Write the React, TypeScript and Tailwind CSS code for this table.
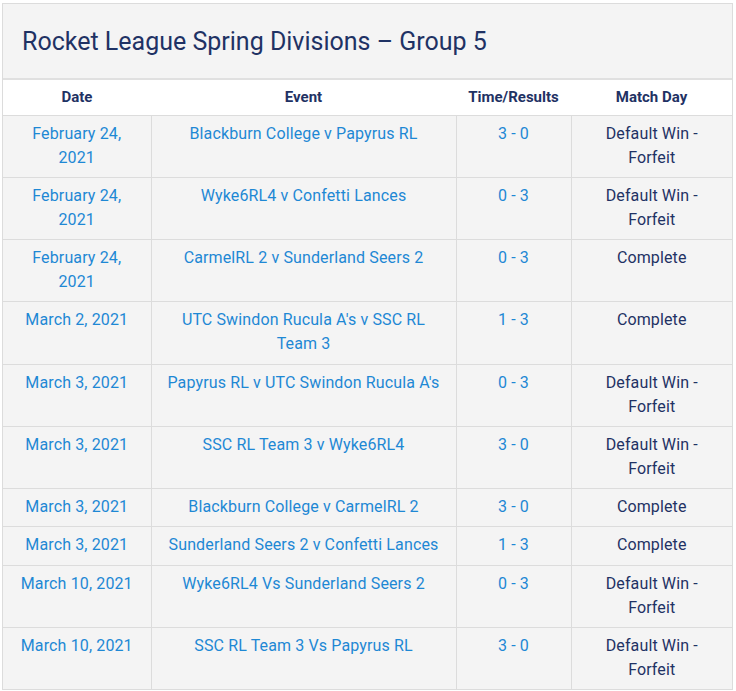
import React from 'react'

type Match = {
    date: string
    event: string
    result: string
    day: string
}

const matches: Match[] = [
    { date: 'February 24, 2021', event: 'Blackburn College v Papyrus RL', result: '3 - 0', day: 'Default Win - Forfeit' },
    { date: 'February 24, 2021', event: 'Wyke6RL4 v Confetti Lances', result: '0 - 3', day: 'Default Win - Forfeit' },
    { date: 'February 24, 2021', event: 'CarmelRL 2 v Sunderland Seers 2', result: '0 - 3', day: 'Complete' },
    { date: 'March 2, 2021', event: "UTC Swindon Rucula A's v SSC RL Team 3", result: '1 - 3', day: 'Complete' },
    { date: 'March 3, 2021', event: "Papyrus RL v UTC Swindon Rucula A's", result: '0 - 3', day: 'Default Win - Forfeit' },
    { date: 'March 3, 2021', event: 'SSC RL Team 3 v Wyke6RL4', result: '3 - 0', day: 'Default Win - Forfeit' },
    { date: 'March 3, 2021', event: 'Blackburn College v CarmelRL 2', result: '3 - 0', day: 'Complete' },
    { date: 'March 3, 2021', event: 'Sunderland Seers 2 v Confetti Lances', result: '1 - 3', day: 'Complete' },
    { date: 'March 10, 2021', event: 'Wyke6RL4 Vs Sunderland Seers 2', result: '0 - 3', day: 'Default Win - Forfeit' },
    { date: 'March 10, 2021', event: 'SSC RL Team 3 Vs Papyrus RL', result: '3 - 0', day: 'Default Win - Forfeit' },
]

export default function App() {
    return (
        <div className="w-[736px] h-[691px] bg-white pt-[3px] pl-[2px] font-['Roboto','Liberation_Sans',sans-serif]">
            <div className="w-[731px] border border-[#dcdcdc] bg-[#f4f4f4]">
                {/* Заголовок */}
                <div className="h-[76px] flex items-center pl-[19px] border-b-2 border-[#e0e0e0]">
                    <h2 className="text-[25px] text-[#1f3264] leading-none">
                        Rocket League Spring Divisions – Group 5
                    </h2>
                </div>

                <table className="w-full border-collapse table-fixed text-[16px] leading-[24px] tracking-[0.13px]">
                    <colgroup>
                        <col className="w-[148px]" />
                        <col className="w-[305px]" />
                        <col className="w-[115px]" />
                        <col />
                    </colgroup>
                    <thead>
                        <tr className="bg-white h-[35px] text-[15px] font-bold text-[#1f3264] tracking-normal">
                            <th className="text-center align-middle">Date</th>
                            <th className="text-center align-middle">Event</th>
                            <th className="text-center align-middle">Time/Results</th>
                            <th className="text-center align-middle">Match Day</th>
                        </tr>
                    </thead>
                    <tbody>
                        {matches.map((m, i) => (
                            <tr key={i} className="border-t border-[#dcdcdc]">
                                <td className="text-center align-top pt-[6px] pb-[7.25px] px-[15px] text-[#1e88d4]">{m.date}</td>
                                <td className="text-center align-top pt-[6px] pb-[7.25px] px-[15px] text-[#1e88d4] border-l border-[#dcdcdc]">{m.event}</td>
                                <td className="text-center align-top pt-[6px] pb-[7.25px] px-[10px] text-[#1e88d4] border-l border-[#dcdcdc]">{m.result}</td>
                                <td className="text-center align-top pt-[6px] pb-[7.25px] px-[22px] text-[#1f3264] border-l border-[#dcdcdc]">{m.day}</td>
                            </tr>
                        ))}
                    </tbody>
                </table>
            </div>
        </div>
    )
}
